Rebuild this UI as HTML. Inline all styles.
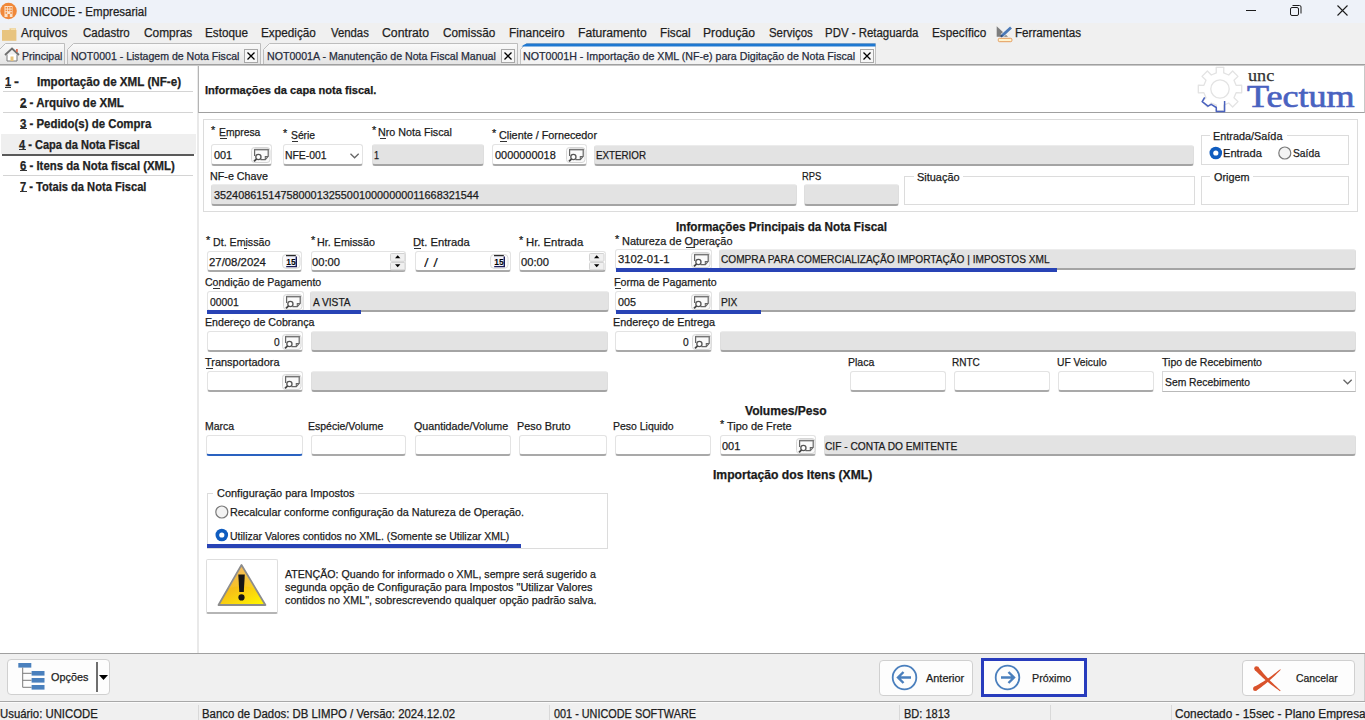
<!DOCTYPE html>
<html><head><meta charset="utf-8">
<style>
*{box-sizing:border-box;margin:0;padding:0}
html,body{width:1365px;height:720px;overflow:hidden;background:#fff;font-family:"Liberation Sans",sans-serif;font-size:11px;color:#000}
.a{position:absolute}
.t{position:absolute;white-space:nowrap;-webkit-text-stroke:0.25px currentColor}
svg{position:absolute;overflow:visible}
</style></head><body>
<div class="a" style="left:0px;top:0px;width:1365px;height:23px;background:#eef2f9"></div>
<svg style="left:0;top:2px" width="18" height="18" viewBox="0 0 18 18"><circle cx="8.5" cy="9" r="8.3" fill="#f0883a"/><rect x="4.5" y="4" width="8" height="11" fill="#fbe3cc"/><g fill="#f0883a"><rect x="5.5" y="5" width="1.6" height="1.6"/><rect x="7.9" y="5" width="1.6" height="1.6"/><rect x="10.3" y="5" width="1.6" height="1.6"/><rect x="5.5" y="7.6" width="1.6" height="1.6"/><rect x="7.9" y="7.6" width="1.6" height="1.6"/><rect x="10.3" y="7.6" width="1.6" height="1.6"/><rect x="5.5" y="10.2" width="1.6" height="1.6"/><rect x="10.3" y="10.2" width="1.6" height="1.6"/><rect x="7.6" y="12" width="2.2" height="3"/></g></svg>
<div class="t" style="left:21.89px;top:4.97px;font-size:12.50px;line-height:15.00px;font-family:'Liberation Sans';font-weight:normal;color:#202020;transform:scaleX(0.9216);transform-origin:0 0;">UNICODE - Empresarial</div>
<div class="a" style="left:1246px;top:10px;width:10px;height:1px;background:#1c1c1c"></div>
<svg style="left:1290px;top:5px" width="12" height="11"><rect x="0.5" y="2.5" width="8" height="8" rx="1.5" fill="none" stroke="#1c1c1c"/><path d="M2.5 0.5H9.5Q11 0.5 11 2V8.5" fill="none" stroke="#1c1c1c"/></svg>
<svg style="left:1337px;top:5px" width="11" height="11"><path d="M0.5 0.5L10.5 10.5M10.5 0.5L0.5 10.5" stroke="#1c1c1c" stroke-width="1.1"/></svg>
<div class="a" style="left:0px;top:23px;width:1365px;height:20px;background:#f0f0f0"></div>
<svg style="left:0;top:26px" width="18" height="16"><path d="M9.5 2.3H16V4.5H9.5Z" fill="#eccb86"/><path d="M11 2.8H15.5V3.8H11Z" fill="#f6e3b8"/><rect x="2" y="4" width="14.4" height="10.8" fill="#e8c47f"/></svg>
<div class="t" style="left:21.20px;top:25.97px;font-size:12.50px;line-height:15.00px;font-family:'Liberation Sans';font-weight:normal;color:#1e1e1e;transform:scaleX(0.9532);transform-origin:0 0;">Arquivos</div>
<div class="t" style="left:82.83px;top:25.97px;font-size:12.50px;line-height:15.00px;font-family:'Liberation Sans';font-weight:normal;color:#1e1e1e;transform:scaleX(0.9186);transform-origin:0 0;">Cadastro</div>
<div class="t" style="left:143.91px;top:25.97px;font-size:12.50px;line-height:15.00px;font-family:'Liberation Sans';font-weight:normal;color:#1e1e1e;transform:scaleX(0.9516);transform-origin:0 0;">Compras</div>
<div class="t" style="left:205.26px;top:25.97px;font-size:12.50px;line-height:15.00px;font-family:'Liberation Sans';font-weight:normal;color:#1e1e1e;transform:scaleX(0.9366);transform-origin:0 0;">Estoque</div>
<div class="t" style="left:261.36px;top:25.97px;font-size:12.50px;line-height:15.00px;font-family:'Liberation Sans';font-weight:normal;color:#1e1e1e;transform:scaleX(0.9399);transform-origin:0 0;">Expedição</div>
<div class="t" style="left:330.50px;top:25.97px;font-size:12.50px;line-height:15.00px;font-family:'Liberation Sans';font-weight:normal;color:#1e1e1e;transform:scaleX(0.9073);transform-origin:0 0;">Vendas</div>
<div class="t" style="left:382.19px;top:25.97px;font-size:12.50px;line-height:15.00px;font-family:'Liberation Sans';font-weight:normal;color:#1e1e1e;transform:scaleX(0.9815);transform-origin:0 0;">Contrato</div>
<div class="t" style="left:443.21px;top:25.97px;font-size:12.50px;line-height:15.00px;font-family:'Liberation Sans';font-weight:normal;color:#1e1e1e;transform:scaleX(0.9414);transform-origin:0 0;">Comissão</div>
<div class="t" style="left:508.85px;top:25.97px;font-size:12.50px;line-height:15.00px;font-family:'Liberation Sans';font-weight:normal;color:#1e1e1e;transform:scaleX(0.9524);transform-origin:0 0;">Financeiro</div>
<div class="t" style="left:578.03px;top:25.97px;font-size:12.50px;line-height:15.00px;font-family:'Liberation Sans';font-weight:normal;color:#1e1e1e;transform:scaleX(0.9695);transform-origin:0 0;">Faturamento</div>
<div class="t" style="left:659.96px;top:25.97px;font-size:12.50px;line-height:15.00px;font-family:'Liberation Sans';font-weight:normal;color:#1e1e1e;transform:scaleX(0.9396);transform-origin:0 0;">Fiscal</div>
<div class="t" style="left:703.03px;top:25.97px;font-size:12.50px;line-height:15.00px;font-family:'Liberation Sans';font-weight:normal;color:#1e1e1e;transform:scaleX(0.9720);transform-origin:0 0;">Produção</div>
<div class="t" style="left:768.54px;top:25.97px;font-size:12.50px;line-height:15.00px;font-family:'Liberation Sans';font-weight:normal;color:#1e1e1e;transform:scaleX(0.9117);transform-origin:0 0;">Serviços</div>
<div class="t" style="left:825.48px;top:25.97px;font-size:12.50px;line-height:15.00px;font-family:'Liberation Sans';font-weight:normal;color:#1e1e1e;transform:scaleX(0.9152);transform-origin:0 0;">PDV - Retaguarda</div>
<div class="t" style="left:932.26px;top:25.97px;font-size:12.50px;line-height:15.00px;font-family:'Liberation Sans';font-weight:normal;color:#1e1e1e;transform:scaleX(0.9410);transform-origin:0 0;">Específico</div>
<div class="t" style="left:1014.87px;top:25.97px;font-size:12.50px;line-height:15.00px;font-family:'Liberation Sans';font-weight:normal;color:#1e1e1e;transform:scaleX(0.9312);transform-origin:0 0;">Ferramentas</div>
<svg style="left:995px;top:25px" width="18" height="18"><path d="M1.7 1.3V11.7H13Z" fill="#7d7d7d"/><path d="M7 10.8L16.3 2.3" stroke="#f4f4f4" stroke-width="4.2"/><path d="M7.2 10.6L16 2.5" stroke="#4b79b6" stroke-width="2.8"/><path d="M5.8 11.8L7.5 10.2" stroke="#2d4f80" stroke-width="2"/><rect x="3.3" y="13.3" width="13.6" height="3.4" rx="1.2" fill="#fff3cc" stroke="#e39a5c" stroke-width="1"/></svg>
<div class="a" style="left:0px;top:43px;width:1365px;height:22px;background:#f0f0f0"></div>
<svg style="left:-1px;top:43px" width="67" height="22"><defs><linearGradient id="tg-1" x1="0" y1="0" x2="0" y2="1"><stop offset="0" stop-color="#fafafa"/><stop offset="1" stop-color="#e3e3e3"/></linearGradient></defs><path d="M0.5 22V6.5L6.5 0.5H65.5V22" fill="url(#tg-1)" stroke="#bdbdbd"/></svg>
<svg style="left:67px;top:43px" width="195" height="22"><defs><linearGradient id="tg67" x1="0" y1="0" x2="0" y2="1"><stop offset="0" stop-color="#fafafa"/><stop offset="1" stop-color="#e3e3e3"/></linearGradient></defs><path d="M0.5 22V6.5L6.5 0.5H193.5V22" fill="url(#tg67)" stroke="#bdbdbd"/></svg>
<svg style="left:263px;top:43px" width="256" height="22"><defs><linearGradient id="tg263" x1="0" y1="0" x2="0" y2="1"><stop offset="0" stop-color="#fafafa"/><stop offset="1" stop-color="#e3e3e3"/></linearGradient></defs><path d="M0.5 22V6.5L6.5 0.5H254.5V22" fill="url(#tg263)" stroke="#bdbdbd"/></svg>
<svg style="left:520px;top:43px" width="357" height="22"><defs><linearGradient id="ta" x1="0" y1="0" x2="0" y2="1"><stop offset="0" stop-color="#fdfdfd"/><stop offset="1" stop-color="#f1f1f1"/></linearGradient></defs><path d="M0.5 22V6.5L6.5 0.5H355.5V22" fill="url(#ta)" stroke="#c4c4c4"/><path d="M3.5 2L6.5 0.5H355.5V3.5H1.5Z" fill="#1f78d1"/></svg>
<div class="a" style="left:0px;top:64px;width:1365px;height:1px;background:#a0a0a0"></div>
<div class="a" style="left:0px;top:65px;width:1365px;height:1px;background:#c8c8c8"></div>
<svg style="left:4px;top:47px" width="16" height="15"><path d="M1 8L8 1.5L15 8" fill="none" stroke="#6e6e6e" stroke-width="1.8"/><path d="M3 7.5V14H13V7.5" fill="#fff" stroke="#7a7a7a" stroke-width="1"/><rect x="6.5" y="9.5" width="3" height="4.5" fill="#e8c37a"/><rect x="12" y="2" width="1.8" height="3" fill="#e07055"/></svg>
<div class="t" style="left:22.06px;top:49.77px;font-size:11.50px;line-height:13.80px;font-family:'Liberation Sans';font-weight:normal;color:#252a3a;transform:scaleX(0.9160);transform-origin:0 0;">Principal</div>
<div class="t" style="left:71.36px;top:49.77px;font-size:11.50px;line-height:13.80px;font-family:'Liberation Sans';font-weight:normal;color:#252a3a;transform:scaleX(0.9180);transform-origin:0 0;">NOT0001 - Listagem de Nota Fiscal</div>
<div class="a" style="left:244px;top:48.6px;width:14px;height:14px;border:1px solid #a8a8a8;background:#f7f7f7"></div>
<svg style="left:247px;top:51.6px" width="8" height="8"><path d="M0.5 0.5L7.5 7.5M7.5 0.5L0.5 7.5" stroke="#000" stroke-width="1.3"/></svg>
<div class="t" style="left:266.85px;top:49.77px;font-size:11.50px;line-height:13.80px;font-family:'Liberation Sans';font-weight:normal;color:#252a3a;transform:scaleX(0.9226);transform-origin:0 0;">NOT0001A - Manutenção de Nota Fiscal Manual</div>
<div class="a" style="left:500.6px;top:48.6px;width:14px;height:14px;border:1px solid #a8a8a8;background:#f7f7f7"></div>
<svg style="left:503.6px;top:51.6px" width="8" height="8"><path d="M0.5 0.5L7.5 7.5M7.5 0.5L0.5 7.5" stroke="#000" stroke-width="1.3"/></svg>
<div class="t" style="left:522.85px;top:49.77px;font-size:11.50px;line-height:13.80px;font-family:'Liberation Sans';font-weight:normal;color:#252a3a;transform:scaleX(0.9257);transform-origin:0 0;">NOT0001H - Importação de XML (NF-e) para Digitação de Nota Fiscal</div>
<div class="a" style="left:859.5px;top:48.6px;width:14px;height:14px;border:1px solid #a8a8a8;background:#f7f7f7"></div>
<svg style="left:862.5px;top:51.6px" width="8" height="8"><path d="M0.5 0.5L7.5 7.5M7.5 0.5L0.5 7.5" stroke="#000" stroke-width="1.3"/></svg>
<div class="a" style="left:0px;top:66px;width:197px;height:588px;background:#fff"></div>
<div class="a" style="left:197px;top:66px;width:2px;height:588px;background:#e9e9e9"></div>
<div class="a" style="left:1px;top:134px;width:195px;height:20px;background:#efefef"></div>
<div class="a" style="left:3px;top:91px;width:190px;height:1px;background:#d4d4d4"></div>
<div class="a" style="left:3px;top:112px;width:190px;height:1px;background:#d4d4d4"></div>
<div class="a" style="left:3px;top:175px;width:190px;height:1px;background:#d4d4d4"></div>
<div class="a" style="left:2px;top:154px;width:192px;height:2px;background:#5a5a5a"></div>
<div class="t" style="left:4.94px;top:75.27px;font-size:12.00px;line-height:14.40px;font-family:'Liberation Sans';font-weight:bold;color:#222;transform:scaleX(0.9220);transform-origin:0 0;">1</div>
<div class="a" style="left:5px;top:87px;width:6px;height:1px;background:#333"></div>
<div class="t" style="left:13.56px;top:75.27px;font-size:12.00px;line-height:14.40px;font-family:'Liberation Sans';font-weight:bold;color:#222;transform:scaleX(1.2346);transform-origin:0 0;">-</div>
<div class="t" style="left:36.60px;top:75.27px;font-size:12.00px;line-height:14.40px;font-family:'Liberation Sans';font-weight:bold;color:#222;transform:scaleX(0.9706);transform-origin:0 0;">Importação de XML (NF-e)</div>
<div class="t" style="left:20.05px;top:95.97px;font-size:12.00px;line-height:14.40px;font-family:'Liberation Sans';font-weight:bold;color:#222;transform:scaleX(0.9587);transform-origin:0 0;">2 - Arquivo de XML</div>
<div class="a" style="left:20px;top:107px;width:7px;height:1px;background:#333"></div>
<div class="t" style="left:20.17px;top:117.07px;font-size:12.00px;line-height:14.40px;font-family:'Liberation Sans';font-weight:bold;color:#222;transform:scaleX(0.9511);transform-origin:0 0;">3 - Pedido(s) de Compra</div>
<div class="a" style="left:20px;top:128px;width:7px;height:1px;background:#333"></div>
<div class="t" style="left:19.49px;top:137.77px;font-size:12.00px;line-height:14.40px;font-family:'Liberation Sans';font-weight:bold;color:#222;transform:scaleX(0.9200);transform-origin:0 0;">4 - Capa da Nota Fiscal</div>
<div class="a" style="left:19px;top:149px;width:7px;height:1px;background:#333"></div>
<div class="t" style="left:20.06px;top:158.87px;font-size:12.00px;line-height:14.40px;font-family:'Liberation Sans';font-weight:bold;color:#222;transform:scaleX(0.9478);transform-origin:0 0;">6 - Itens da Nota fiscal (XML)</div>
<div class="a" style="left:20px;top:170px;width:7px;height:1px;background:#333"></div>
<div class="t" style="left:19.96px;top:179.97px;font-size:12.00px;line-height:14.40px;font-family:'Liberation Sans';font-weight:bold;color:#222;transform:scaleX(0.9262);transform-origin:0 0;">7 - Totais da Nota Fiscal</div>
<div class="a" style="left:20px;top:191px;width:7px;height:1px;background:#333"></div>
<div class="a" style="left:198px;top:66px;width:1167px;height:47px;border-left:1px solid #b4b4b4;border-bottom:1px solid #a0a0a0;border-right:1px solid #c8c8c8;background:#fff"></div>
<div class="t" style="left:205.33px;top:84.07px;font-size:11.50px;line-height:13.80px;font-family:'Liberation Sans';font-weight:bold;color:#1a1a1a;transform:scaleX(0.9648);transform-origin:0 0;">Informações da capa nota fiscal.</div>
<svg style="left:1196px;top:66px" width="48" height="48" viewBox="0 0 48 48"><g fill="none" stroke="#e3e3e3" stroke-width="1.3" stroke-linejoin="round"><path d="M20.3 39.1 L20.2 44.7 L27.8 44.7 L27.7 39.1 L32.7 37.0 L36.6 41.0 L42.0 35.6 L38.0 31.7 L40.1 26.7 L45.7 26.8 L45.7 19.2 L40.1 19.3 L38.0 14.3 L42.0 10.4 L36.6 5.0 L32.7 9.0 L27.7 6.9 L27.8 1.3 L20.2 1.3 L20.3 6.9 L15.3 9.0 L11.4 5.0 L6.0 10.4 L10.0 14.3 L7.9 19.3 L2.3 19.2 L2.3 26.8 L7.9 26.7 L10.0 31.7 L6.0 35.6 L11.4 41.0 L15.3 37.0Z"/><circle cx="24" cy="23" r="9.2"/></g><path d="M8.7 31.3L6.2 35.7L12 40.2L15.2 38.3L20.3 41.5V45.4H28.6V35.1" fill="none" stroke="#4a62bf" stroke-width="1.5" stroke-linejoin="round"/></svg>
<div class="t" style="left:1247.52px;top:65.56px;font-size:17.00px;line-height:20.40px;font-family:'Liberation Serif';font-weight:normal;color:#333333;transform:scaleX(1.0680);transform-origin:0 0;">unc</div>
<div class="t" style="left:1247.34px;top:76.84px;font-size:32.00px;line-height:38.40px;font-family:'Liberation Serif';font-weight:normal;color:#4a62c0;transform:scaleX(1.1272);transform-origin:0 0;-webkit-text-stroke:0.7px #4a62c0;">Tectum</div>
<div class="a" style="left:203px;top:119px;width:1155px;height:93px;border:1px solid #dcdcdc"></div>
<div class="t" style="left:211.09px;top:125.08px;font-size:10.00px;line-height:12.00px;font-family:'Liberation Sans';font-weight:normal;color:#1b1b1b;transform:scaleX(1.0811);transform-origin:0 0;">*</div>
<div class="t" style="left:218.67px;top:126.37px;font-size:11.50px;line-height:13.80px;font-family:'Liberation Sans';font-weight:normal;color:#1b1b1b;transform:scaleX(0.8972);transform-origin:0 0;">Empresa</div>
<div class="a" style="left:220px;top:138px;width:7px;height:1px;background:#333"></div>
<div class="t" style="left:283.19px;top:127.78px;font-size:10.00px;line-height:12.00px;font-family:'Liberation Sans';font-weight:normal;color:#1b1b1b;transform:scaleX(1.0811);transform-origin:0 0;">*</div>
<div class="t" style="left:291.29px;top:129.07px;font-size:11.50px;line-height:13.80px;font-family:'Liberation Sans';font-weight:normal;color:#1b1b1b;transform:scaleX(0.8972);transform-origin:0 0;">Série</div>
<div class="a" style="left:292px;top:141px;width:6px;height:1px;background:#333"></div>
<div class="t" style="left:371.89px;top:125.08px;font-size:10.00px;line-height:12.00px;font-family:'Liberation Sans';font-weight:normal;color:#1b1b1b;transform:scaleX(1.0811);transform-origin:0 0;">*</div>
<div class="t" style="left:378.44px;top:126.37px;font-size:11.50px;line-height:13.80px;font-family:'Liberation Sans';font-weight:normal;color:#1b1b1b;transform:scaleX(0.9329);transform-origin:0 0;">Nro Nota Fiscal</div>
<div class="a" style="left:380px;top:138px;width:6px;height:1px;background:#333"></div>
<div class="t" style="left:491.59px;top:127.78px;font-size:10.00px;line-height:12.00px;font-family:'Liberation Sans';font-weight:normal;color:#1b1b1b;transform:scaleX(1.0811);transform-origin:0 0;">*</div>
<div class="t" style="left:499.46px;top:129.07px;font-size:11.50px;line-height:13.80px;font-family:'Liberation Sans';font-weight:normal;color:#1b1b1b;transform:scaleX(0.9404);transform-origin:0 0;">Cliente / Fornecedor</div>
<div class="a" style="left:500px;top:141px;width:7px;height:1px;background:#333"></div>
<div class="a" style="left:211px;top:144px;width:61px;height:22px;background:#fff;border:1px solid #e3e3e3;border-bottom:2px solid #a9a9a9;border-radius:3px"></div>
<svg style="left:251px;top:147px" width="20" height="16" viewBox="0 0 20 16"><rect x="0.5" y="0.5" width="18.5" height="15" rx="3" fill="#fafafa" stroke="#d6d6d6"/><path d="M3.6 9V2.5H17.2V9.3L14.3 12.6H9.5" fill="none" stroke="#666" stroke-width="1.2"/><path d="M3.4 2.6H17.4" stroke="#777" stroke-width="1.6"/><path d="M14.3 12.6V9.5H17.2" fill="none" stroke="#666" stroke-width="1.1"/><circle cx="7.4" cy="10" r="2.6" fill="#fff" stroke="#555" stroke-width="1.3"/><path d="M5.6 11.9L3 14.4" stroke="#444" stroke-width="1.8"/></svg>
<div class="t" style="left:214.37px;top:149.47px;font-size:11.50px;line-height:13.80px;font-family:'Liberation Sans';font-weight:normal;color:#1b1b1b;transform:scaleX(0.9448);transform-origin:0 0;">001</div>
<div class="a" style="left:283px;top:144px;width:80px;height:22px;background:#fff;border:1px solid #e3e3e3;border-bottom:2px solid #a9a9a9;border-radius:3px"></div>
<div class="t" style="left:284.87px;top:149.07px;font-size:11.50px;line-height:13.80px;font-family:'Liberation Sans';font-weight:normal;color:#1b1b1b;transform:scaleX(0.9043);transform-origin:0 0;">NFE-001</div>
<svg style="left:349.5px;top:153px" width="10" height="6"><path d="M0.5 0.8L4.6 4.8L8.7 0.8" fill="none" stroke="#666" stroke-width="1.3"/></svg>
<div class="a" style="left:371.7px;top:144px;width:112.60000000000002px;height:22px;background:#e3e3e3;border:1px solid #dedede;border-top-color:#ececec;border-bottom:2px solid #a4a4a4;border-radius:3px"></div>
<div class="t" style="left:374.36px;top:149.07px;font-size:11.50px;line-height:13.80px;font-family:'Liberation Sans';font-weight:normal;color:#1b1b1b;transform:scaleX(0.7905);transform-origin:0 0;">1</div>
<div class="a" style="left:491.7px;top:144px;width:95.30000000000001px;height:22px;background:#fff;border:1px solid #e3e3e3;border-bottom:2px solid #a9a9a9;border-radius:3px"></div>
<svg style="left:565.5px;top:147px" width="20" height="16" viewBox="0 0 20 16"><rect x="0.5" y="0.5" width="18.5" height="15" rx="3" fill="#fafafa" stroke="#d6d6d6"/><path d="M3.6 9V2.5H17.2V9.3L14.3 12.6H9.5" fill="none" stroke="#666" stroke-width="1.2"/><path d="M3.4 2.6H17.4" stroke="#777" stroke-width="1.6"/><path d="M14.3 12.6V9.5H17.2" fill="none" stroke="#666" stroke-width="1.1"/><circle cx="7.4" cy="10" r="2.6" fill="#fff" stroke="#555" stroke-width="1.3"/><path d="M5.6 11.9L3 14.4" stroke="#444" stroke-width="1.8"/></svg>
<div class="t" style="left:494.67px;top:149.07px;font-size:11.50px;line-height:13.80px;font-family:'Liberation Sans';font-weight:normal;color:#1b1b1b;transform:scaleX(0.9494);transform-origin:0 0;">0000000018</div>
<div class="a" style="left:594.3px;top:145px;width:599.7px;height:21px;background:#e3e3e3;border:1px solid #dedede;border-top-color:#ececec;border-bottom:2px solid #a4a4a4;border-radius:3px"></div>
<div class="t" style="left:595.92px;top:149.07px;font-size:11.50px;line-height:13.80px;font-family:'Liberation Sans';font-weight:normal;color:#1b1b1b;transform:scaleX(0.8505);transform-origin:0 0;">EXTERIOR</div>
<div class="t" style="left:209.84px;top:169.77px;font-size:11.50px;line-height:13.80px;font-family:'Liberation Sans';font-weight:normal;color:#1b1b1b;transform:scaleX(0.9331);transform-origin:0 0;">NF-e Chave</div>
<div class="a" style="left:211px;top:184px;width:585.5px;height:22px;background:#e3e3e3;border:1px solid #dedede;border-top-color:#ececec;border-bottom:2px solid #a4a4a4;border-radius:3px"></div>
<div class="t" style="left:213.67px;top:189.07px;font-size:11.50px;line-height:13.80px;font-family:'Liberation Sans';font-weight:normal;color:#1b1b1b;transform:scaleX(0.9442);transform-origin:0 0;">35240861514758000132550010000000011668321544</div>
<div class="t" style="left:802.05px;top:169.77px;font-size:11.50px;line-height:13.80px;font-family:'Liberation Sans';font-weight:normal;color:#1b1b1b;transform:scaleX(0.8161);transform-origin:0 0;">RPS</div>
<div class="a" style="left:803.6px;top:184px;width:95.0px;height:22px;background:#e3e3e3;border:1px solid #dedede;border-top-color:#ececec;border-bottom:2px solid #a4a4a4;border-radius:3px"></div>
<div class="a" style="left:904.4px;top:176px;width:290.19999999999993px;height:29px;border:1px solid #dcdcdc"></div>
<div class="a" style="left:913.6px;top:175px;width:49.69999999999993px;height:3px;background:#fff"></div>
<div class="t" style="left:917.16px;top:170.57px;font-size:11.50px;line-height:13.80px;font-family:'Liberation Sans';font-weight:normal;color:#1b1b1b;transform:scaleX(0.9504);transform-origin:0 0;">Situação</div>
<div class="a" style="left:1201px;top:135px;width:148px;height:30px;border:1px solid #dcdcdc"></div>
<div class="a" style="left:1210px;top:134px;width:76.59999999999991px;height:3px;background:#fff"></div>
<div class="t" style="left:1213.13px;top:130.47px;font-size:11.50px;line-height:13.80px;font-family:'Liberation Sans';font-weight:normal;color:#1b1b1b;transform:scaleX(0.9443);transform-origin:0 0;">Entrada/Saída</div>
<svg style="left:1208.5px;top:146.2px" width="14" height="14"><circle cx="6.8" cy="7" r="6.3" fill="#0f5cbf"/><circle cx="6.8" cy="7" r="2.6" fill="#fff"/></svg>
<div class="t" style="left:1223.11px;top:147.27px;font-size:11.50px;line-height:13.80px;font-family:'Liberation Sans';font-weight:normal;color:#1b1b1b;transform:scaleX(0.9644);transform-origin:0 0;">Entrada</div>
<svg style="left:1277.5px;top:146.2px" width="14" height="14"><circle cx="6.8" cy="7" r="6" fill="#f3f3f3" stroke="#7a7a7a" stroke-width="1.2"/></svg>
<div class="t" style="left:1292.59px;top:147.27px;font-size:11.50px;line-height:13.80px;font-family:'Liberation Sans';font-weight:normal;color:#1b1b1b;transform:scaleX(0.8942);transform-origin:0 0;">Saída</div>
<div class="a" style="left:1201px;top:176px;width:148px;height:29px;border:1px solid #dcdcdc"></div>
<div class="a" style="left:1210.4px;top:175px;width:42.299999999999955px;height:3px;background:#fff"></div>
<div class="t" style="left:1213.97px;top:170.57px;font-size:11.50px;line-height:13.80px;font-family:'Liberation Sans';font-weight:normal;color:#1b1b1b;transform:scaleX(0.9393);transform-origin:0 0;">Origem</div>
<div class="t" style="left:676.30px;top:220.47px;font-size:12.00px;line-height:14.40px;font-family:'Liberation Sans';font-weight:bold;color:#1a1a1a;transform:scaleX(0.9730);transform-origin:0 0;">Informações Principais da Nota Fiscal</div>
<div class="t" style="left:206.39px;top:234.88px;font-size:10.00px;line-height:12.00px;font-family:'Liberation Sans';font-weight:normal;color:#1b1b1b;transform:scaleX(1.0811);transform-origin:0 0;">*</div>
<div class="t" style="left:213.45px;top:236.17px;font-size:11.50px;line-height:13.80px;font-family:'Liberation Sans';font-weight:normal;color:#1b1b1b;transform:scaleX(0.9250);transform-origin:0 0;">Dt. Emissão</div>
<div class="a" style="left:244px;top:248px;width:3px;height:1px;background:#333"></div>
<div class="a" style="left:206.5px;top:251px;width:95.5px;height:21px;background:#fff;border:1px solid #e3e3e3;border-bottom:2px solid #a9a9a9;border-radius:3px"></div>
<svg style="left:281.5px;top:254px" width="19" height="15" viewBox="0 0 19 15"><rect x="0.5" y="0.5" width="17.5" height="13.8" rx="3.5" fill="#fbfbfb" stroke="#dadada"/><rect x="4" y="2" width="10" height="10.3" fill="#f2f2fb"/><path d="M4 1.6H13.8" stroke="#2a2a2a" stroke-width="1.3"/><path d="M14.3 2.5V12.6H4.2" fill="none" stroke="#1d1d58" stroke-width="1.4"/><text x="9" y="10.6" font-family="Liberation Sans" font-weight="bold" font-size="8.5" text-anchor="middle" fill="#000">15</text></svg>
<div class="t" style="left:209.43px;top:255.57px;font-size:11.50px;line-height:13.80px;font-family:'Liberation Sans';font-weight:normal;color:#1b1b1b;transform:scaleX(0.9880);transform-origin:0 0;">27/08/2024</div>
<div class="t" style="left:310.79px;top:234.88px;font-size:10.00px;line-height:12.00px;font-family:'Liberation Sans';font-weight:normal;color:#1b1b1b;transform:scaleX(1.0811);transform-origin:0 0;">*</div>
<div class="t" style="left:317.14px;top:236.17px;font-size:11.50px;line-height:13.80px;font-family:'Liberation Sans';font-weight:normal;color:#1b1b1b;transform:scaleX(0.9349);transform-origin:0 0;">Hr. Emissão</div>
<div class="a" style="left:310.9px;top:251px;width:95.30000000000001px;height:21px;background:#fff;border:1px solid #e3e3e3;border-bottom:2px solid #a9a9a9;border-radius:3px"></div>
<svg style="left:390px;top:252.5px" width="16" height="18" viewBox="0 0 16 18"><rect x="0.5" y="0.5" width="14.5" height="7.8" rx="1" fill="#f0f0f0" stroke="#d2d2d2"/><rect x="0.5" y="9.5" width="14.5" height="7.4" rx="1" fill="#f0f0f0" stroke="#d2d2d2"/><path d="M5 5.2H10.4L7.7 2.2Z" fill="#000"/><path d="M5 11.2H10.4L7.7 14.2Z" fill="#000"/></svg>
<div class="t" style="left:312.47px;top:255.57px;font-size:11.50px;line-height:13.80px;font-family:'Liberation Sans';font-weight:normal;color:#1b1b1b;transform:scaleX(0.9708);transform-origin:0 0;">00:00</div>
<div class="t" style="left:413.10px;top:236.17px;font-size:11.50px;line-height:13.80px;font-family:'Liberation Sans';font-weight:normal;color:#1b1b1b;transform:scaleX(0.9740);transform-origin:0 0;">Dt. Entrada</div>
<div class="a" style="left:414px;top:248px;width:7px;height:1px;background:#333"></div>
<div class="a" style="left:414.6px;top:251px;width:96.59999999999997px;height:21px;background:#fff;border:1px solid #e3e3e3;border-bottom:2px solid #a9a9a9;border-radius:3px"></div>
<svg style="left:490.3px;top:254px" width="19" height="15" viewBox="0 0 19 15"><rect x="0.5" y="0.5" width="17.5" height="13.8" rx="3.5" fill="#fbfbfb" stroke="#dadada"/><rect x="4" y="2" width="10" height="10.3" fill="#f2f2fb"/><path d="M4 1.6H13.8" stroke="#2a2a2a" stroke-width="1.3"/><path d="M14.3 2.5V12.6H4.2" fill="none" stroke="#1d1d58" stroke-width="1.4"/><text x="9" y="10.6" font-family="Liberation Sans" font-weight="bold" font-size="8.5" text-anchor="middle" fill="#000">15</text></svg>
<div class="t" style="left:424.00px;top:255.37px;font-size:13.00px;line-height:15.60px;font-family:'Liberation Sans';font-weight:normal;color:#1b1b1b;transform:scaleX(1.2887);transform-origin:0 0;-webkit-text-stroke:0;">/ /</div>
<div class="t" style="left:518.89px;top:234.88px;font-size:10.00px;line-height:12.00px;font-family:'Liberation Sans';font-weight:normal;color:#1b1b1b;transform:scaleX(1.0811);transform-origin:0 0;">*</div>
<div class="t" style="left:525.60px;top:236.17px;font-size:11.50px;line-height:13.80px;font-family:'Liberation Sans';font-weight:normal;color:#1b1b1b;transform:scaleX(0.9827);transform-origin:0 0;">Hr. Entrada</div>
<div class="a" style="left:519px;top:251px;width:86.60000000000002px;height:21px;background:#fff;border:1px solid #e3e3e3;border-bottom:2px solid #a9a9a9;border-radius:3px"></div>
<svg style="left:589px;top:252.5px" width="16" height="18" viewBox="0 0 16 18"><rect x="0.5" y="0.5" width="14.5" height="7.8" rx="1" fill="#f0f0f0" stroke="#d2d2d2"/><rect x="0.5" y="9.5" width="14.5" height="7.4" rx="1" fill="#f0f0f0" stroke="#d2d2d2"/><path d="M5 5.2H10.4L7.7 2.2Z" fill="#000"/><path d="M5 11.2H10.4L7.7 14.2Z" fill="#000"/></svg>
<div class="t" style="left:521.17px;top:255.57px;font-size:11.50px;line-height:13.80px;font-family:'Liberation Sans';font-weight:normal;color:#1b1b1b;transform:scaleX(0.9708);transform-origin:0 0;">00:00</div>
<div class="t" style="left:615.29px;top:234.18px;font-size:10.00px;line-height:12.00px;font-family:'Liberation Sans';font-weight:normal;color:#1b1b1b;transform:scaleX(1.0811);transform-origin:0 0;">*</div>
<div class="t" style="left:621.83px;top:235.47px;font-size:11.50px;line-height:13.80px;font-family:'Liberation Sans';font-weight:normal;color:#1b1b1b;transform:scaleX(0.9495);transform-origin:0 0;">Natureza de Operação</div>
<div class="a" style="left:686px;top:247px;width:9px;height:1px;background:#333"></div>
<div class="a" style="left:615.4px;top:249px;width:96.30000000000007px;height:21px;background:#fff;border:1px solid #e3e3e3;border-bottom:2px solid #a9a9a9;border-radius:3px"></div>
<svg style="left:690.5px;top:252px" width="20" height="16" viewBox="0 0 20 16"><rect x="0.5" y="0.5" width="18.5" height="15" rx="3" fill="#fafafa" stroke="#d6d6d6"/><path d="M3.6 9V2.5H17.2V9.3L14.3 12.6H9.5" fill="none" stroke="#666" stroke-width="1.2"/><path d="M3.4 2.6H17.4" stroke="#777" stroke-width="1.6"/><path d="M14.3 12.6V9.5H17.2" fill="none" stroke="#666" stroke-width="1.1"/><circle cx="7.4" cy="10" r="2.6" fill="#fff" stroke="#555" stroke-width="1.3"/><path d="M5.6 11.9L3 14.4" stroke="#444" stroke-width="1.8"/></svg>
<div class="t" style="left:617.96px;top:252.77px;font-size:11.50px;line-height:13.80px;font-family:'Liberation Sans';font-weight:normal;color:#1b1b1b;transform:scaleX(0.9815);transform-origin:0 0;">3102-01-1</div>
<div class="a" style="left:719px;top:249px;width:637px;height:21px;background:#e3e3e3;border:1px solid #dedede;border-top-color:#ececec;border-bottom:2px solid #a4a4a4;border-radius:3px"></div>
<div class="t" style="left:721.09px;top:252.97px;font-size:11.50px;line-height:13.80px;font-family:'Liberation Sans';font-weight:normal;color:#1b1b1b;transform:scaleX(0.8799);transform-origin:0 0;">COMPRA PARA COMERCIALIZAÇÃO IMPORTAÇÃO | IMPOSTOS XML</div>
<div class="a" style="left:616px;top:268px;width:441.0999999999999px;height:4px;background:#2843b5"></div>
<div class="t" style="left:205.37px;top:276.07px;font-size:11.50px;line-height:13.80px;font-family:'Liberation Sans';font-weight:normal;color:#1b1b1b;transform:scaleX(0.9180);transform-origin:0 0;">Condição de Pagamento</div>
<div class="a" style="left:213px;top:288px;width:7px;height:1px;background:#333"></div>
<div class="a" style="left:206.5px;top:291px;width:97.5px;height:21px;background:#fff;border:1px solid #e3e3e3;border-bottom:2px solid #a9a9a9;border-radius:3px"></div>
<svg style="left:282.5px;top:294px" width="20" height="16" viewBox="0 0 20 16"><rect x="0.5" y="0.5" width="18.5" height="15" rx="3" fill="#fafafa" stroke="#d6d6d6"/><path d="M3.6 9V2.5H17.2V9.3L14.3 12.6H9.5" fill="none" stroke="#666" stroke-width="1.2"/><path d="M3.4 2.6H17.4" stroke="#777" stroke-width="1.6"/><path d="M14.3 12.6V9.5H17.2" fill="none" stroke="#666" stroke-width="1.1"/><circle cx="7.4" cy="10" r="2.6" fill="#fff" stroke="#555" stroke-width="1.3"/><path d="M5.6 11.9L3 14.4" stroke="#444" stroke-width="1.8"/></svg>
<div class="t" style="left:209.69px;top:295.57px;font-size:11.50px;line-height:13.80px;font-family:'Liberation Sans';font-weight:normal;color:#1b1b1b;transform:scaleX(0.9002);transform-origin:0 0;">00001</div>
<div class="a" style="left:310.3px;top:291px;width:298.40000000000003px;height:21px;background:#e3e3e3;border:1px solid #dedede;border-top-color:#ececec;border-bottom:2px solid #a4a4a4;border-radius:3px"></div>
<div class="t" style="left:312.80px;top:295.57px;font-size:11.50px;line-height:13.80px;font-family:'Liberation Sans';font-weight:normal;color:#1b1b1b;transform:scaleX(0.8827);transform-origin:0 0;">A VISTA</div>
<div class="a" style="left:206.5px;top:310px;width:154.5px;height:4px;background:#2843b5"></div>
<div class="t" style="left:614.15px;top:276.07px;font-size:11.50px;line-height:13.80px;font-family:'Liberation Sans';font-weight:normal;color:#1b1b1b;transform:scaleX(0.9236);transform-origin:0 0;">Forma de Pagamento</div>
<div class="a" style="left:615px;top:288px;width:6px;height:1px;background:#333"></div>
<div class="a" style="left:615.4px;top:291px;width:96.30000000000007px;height:21px;background:#fff;border:1px solid #e3e3e3;border-bottom:2px solid #a9a9a9;border-radius:3px"></div>
<svg style="left:690.5px;top:294px" width="20" height="16" viewBox="0 0 20 16"><rect x="0.5" y="0.5" width="18.5" height="15" rx="3" fill="#fafafa" stroke="#d6d6d6"/><path d="M3.6 9V2.5H17.2V9.3L14.3 12.6H9.5" fill="none" stroke="#666" stroke-width="1.2"/><path d="M3.4 2.6H17.4" stroke="#777" stroke-width="1.6"/><path d="M14.3 12.6V9.5H17.2" fill="none" stroke="#666" stroke-width="1.1"/><circle cx="7.4" cy="10" r="2.6" fill="#fff" stroke="#555" stroke-width="1.3"/><path d="M5.6 11.9L3 14.4" stroke="#444" stroke-width="1.8"/></svg>
<div class="t" style="left:617.98px;top:295.57px;font-size:11.50px;line-height:13.80px;font-family:'Liberation Sans';font-weight:normal;color:#1b1b1b;transform:scaleX(0.9334);transform-origin:0 0;">005</div>
<div class="a" style="left:719px;top:291px;width:637px;height:21px;background:#e3e3e3;border:1px solid #dedede;border-top-color:#ececec;border-bottom:2px solid #a4a4a4;border-radius:3px"></div>
<div class="t" style="left:720.79px;top:295.57px;font-size:11.50px;line-height:13.80px;font-family:'Liberation Sans';font-weight:normal;color:#1b1b1b;transform:scaleX(0.8840);transform-origin:0 0;">PIX</div>
<div class="a" style="left:616px;top:310px;width:145.20000000000005px;height:4px;background:#2843b5"></div>
<div class="t" style="left:204.85px;top:316.37px;font-size:11.50px;line-height:13.80px;font-family:'Liberation Sans';font-weight:normal;color:#1b1b1b;transform:scaleX(0.9251);transform-origin:0 0;">Endereço de Cobrança</div>
<div class="a" style="left:206.7px;top:331px;width:96.60000000000002px;height:21px;background:#fff;border:1px solid #e3e3e3;border-bottom:2px solid #a9a9a9;border-radius:3px"></div>
<svg style="left:282px;top:334px" width="20" height="16" viewBox="0 0 20 16"><rect x="0.5" y="0.5" width="18.5" height="15" rx="3" fill="#fafafa" stroke="#d6d6d6"/><path d="M3.6 9V2.5H17.2V9.3L14.3 12.6H9.5" fill="none" stroke="#666" stroke-width="1.2"/><path d="M3.4 2.6H17.4" stroke="#777" stroke-width="1.6"/><path d="M14.3 12.6V9.5H17.2" fill="none" stroke="#666" stroke-width="1.1"/><circle cx="7.4" cy="10" r="2.6" fill="#fff" stroke="#555" stroke-width="1.3"/><path d="M5.6 11.9L3 14.4" stroke="#444" stroke-width="1.8"/></svg>
<div class="t" style="left:273.69px;top:335.57px;font-size:11.50px;line-height:13.80px;font-family:'Liberation Sans';font-weight:normal;color:#1b1b1b;transform:scaleX(0.8873);transform-origin:0 0;">0</div>
<div class="a" style="left:310.7px;top:331px;width:297.59999999999997px;height:21px;background:#e3e3e3;border:1px solid #dedede;border-top-color:#ececec;border-bottom:2px solid #a4a4a4;border-radius:3px"></div>
<div class="t" style="left:613.14px;top:316.37px;font-size:11.50px;line-height:13.80px;font-family:'Liberation Sans';font-weight:normal;color:#1b1b1b;transform:scaleX(0.9387);transform-origin:0 0;">Endereço de Entrega</div>
<div class="a" style="left:615.2px;top:331px;width:97.09999999999991px;height:21px;background:#fff;border:1px solid #e3e3e3;border-bottom:2px solid #a9a9a9;border-radius:3px"></div>
<svg style="left:691.5px;top:334px" width="20" height="16" viewBox="0 0 20 16"><rect x="0.5" y="0.5" width="18.5" height="15" rx="3" fill="#fafafa" stroke="#d6d6d6"/><path d="M3.6 9V2.5H17.2V9.3L14.3 12.6H9.5" fill="none" stroke="#666" stroke-width="1.2"/><path d="M3.4 2.6H17.4" stroke="#777" stroke-width="1.6"/><path d="M14.3 12.6V9.5H17.2" fill="none" stroke="#666" stroke-width="1.1"/><circle cx="7.4" cy="10" r="2.6" fill="#fff" stroke="#555" stroke-width="1.3"/><path d="M5.6 11.9L3 14.4" stroke="#444" stroke-width="1.8"/></svg>
<div class="t" style="left:682.69px;top:335.57px;font-size:11.50px;line-height:13.80px;font-family:'Liberation Sans';font-weight:normal;color:#1b1b1b;transform:scaleX(0.8873);transform-origin:0 0;">0</div>
<div class="a" style="left:720.2px;top:331px;width:635.8px;height:21px;background:#e3e3e3;border:1px solid #dedede;border-top-color:#ececec;border-bottom:2px solid #a4a4a4;border-radius:3px"></div>
<div class="t" style="left:205.48px;top:356.37px;font-size:11.50px;line-height:13.80px;font-family:'Liberation Sans';font-weight:normal;color:#1b1b1b;transform:scaleX(0.9524);transform-origin:0 0;">Transportadora</div>
<div class="a" style="left:206px;top:368px;width:7px;height:1px;background:#333"></div>
<div class="a" style="left:206.7px;top:371px;width:96.60000000000002px;height:21px;background:#fff;border:1px solid #e3e3e3;border-bottom:2px solid #a9a9a9;border-radius:3px"></div>
<svg style="left:282px;top:374px" width="20" height="16" viewBox="0 0 20 16"><rect x="0.5" y="0.5" width="18.5" height="15" rx="3" fill="#fafafa" stroke="#d6d6d6"/><path d="M3.6 9V2.5H17.2V9.3L14.3 12.6H9.5" fill="none" stroke="#666" stroke-width="1.2"/><path d="M3.4 2.6H17.4" stroke="#777" stroke-width="1.6"/><path d="M14.3 12.6V9.5H17.2" fill="none" stroke="#666" stroke-width="1.1"/><circle cx="7.4" cy="10" r="2.6" fill="#fff" stroke="#555" stroke-width="1.3"/><path d="M5.6 11.9L3 14.4" stroke="#444" stroke-width="1.8"/></svg>
<div class="a" style="left:310.7px;top:371px;width:297.59999999999997px;height:21px;background:#e3e3e3;border:1px solid #dedede;border-top-color:#ececec;border-bottom:2px solid #a4a4a4;border-radius:3px"></div>
<div class="t" style="left:847.86px;top:356.27px;font-size:11.50px;line-height:13.80px;font-family:'Liberation Sans';font-weight:normal;color:#1b1b1b;transform:scaleX(0.9143);transform-origin:0 0;">Placa</div>
<div class="a" style="left:849.9px;top:371px;width:96.10000000000002px;height:21px;background:#fff;border:1px solid #e3e3e3;border-bottom:2px solid #a9a9a9;border-radius:3px"></div>
<div class="t" style="left:952.00px;top:356.27px;font-size:11.50px;line-height:13.80px;font-family:'Liberation Sans';font-weight:normal;color:#1b1b1b;transform:scaleX(0.8711);transform-origin:0 0;">RNTC</div>
<div class="a" style="left:954.3px;top:371px;width:95.70000000000005px;height:21px;background:#fff;border:1px solid #e3e3e3;border-bottom:2px solid #a9a9a9;border-radius:3px"></div>
<div class="t" style="left:1056.78px;top:356.17px;font-size:11.50px;line-height:13.80px;font-family:'Liberation Sans';font-weight:normal;color:#1b1b1b;transform:scaleX(0.8936);transform-origin:0 0;">UF Veiculo</div>
<div class="a" style="left:1058.3px;top:371px;width:96.0px;height:21px;background:#fff;border:1px solid #e3e3e3;border-bottom:2px solid #a9a9a9;border-radius:3px"></div>
<div class="t" style="left:1161.59px;top:356.17px;font-size:11.50px;line-height:13.80px;font-family:'Liberation Sans';font-weight:normal;color:#1b1b1b;transform:scaleX(0.9183);transform-origin:0 0;">Tipo de Recebimento</div>
<div class="a" style="left:1162px;top:371px;width:194px;height:21px;background:#fff;border:1px solid #d9d9d9;border-bottom:1px solid #b9b9b9"></div>
<div class="t" style="left:1165.39px;top:375.57px;font-size:11.50px;line-height:13.80px;font-family:'Liberation Sans';font-weight:normal;color:#1b1b1b;transform:scaleX(0.8984);transform-origin:0 0;">Sem Recebimento</div>
<svg style="left:1342.5px;top:379px" width="10" height="6"><path d="M0.5 0.8L4.6 4.8L8.7 0.8" fill="none" stroke="#666" stroke-width="1.3"/></svg>
<div class="t" style="left:745.20px;top:404.07px;font-size:12.00px;line-height:14.40px;font-family:'Liberation Sans';font-weight:bold;color:#1a1a1a;transform:scaleX(1.0053);transform-origin:0 0;">Volumes/Peso</div>
<div class="t" style="left:204.86px;top:420.07px;font-size:11.50px;line-height:13.80px;font-family:'Liberation Sans';font-weight:normal;color:#1b1b1b;transform:scaleX(0.9107);transform-origin:0 0;">Marca</div>
<div class="a" style="left:206px;top:435px;width:96.69999999999999px;height:21px;background:#fff;border:1px solid #e3e3e3;border-bottom:2px solid #2a62c0;border-radius:3px"></div>
<div class="t" style="left:308.46px;top:420.07px;font-size:11.50px;line-height:13.80px;font-family:'Liberation Sans';font-weight:normal;color:#1b1b1b;transform:scaleX(0.9121);transform-origin:0 0;">Espécie/Volume</div>
<div class="a" style="left:310.7px;top:435px;width:95.30000000000001px;height:21px;background:#fff;border:1px solid #e3e3e3;border-bottom:2px solid #a9a9a9;border-radius:3px"></div>
<div class="t" style="left:413.57px;top:420.07px;font-size:11.50px;line-height:13.80px;font-family:'Liberation Sans';font-weight:normal;color:#1b1b1b;transform:scaleX(0.9317);transform-origin:0 0;">Quantidade/Volume</div>
<div class="a" style="left:415px;top:435px;width:95.69999999999999px;height:21px;background:#fff;border:1px solid #e3e3e3;border-bottom:2px solid #a9a9a9;border-radius:3px"></div>
<div class="t" style="left:516.83px;top:420.07px;font-size:11.50px;line-height:13.80px;font-family:'Liberation Sans';font-weight:normal;color:#1b1b1b;transform:scaleX(0.9414);transform-origin:0 0;">Peso Bruto</div>
<div class="a" style="left:519px;top:435px;width:88.29999999999995px;height:21px;background:#fff;border:1px solid #e3e3e3;border-bottom:2px solid #a9a9a9;border-radius:3px"></div>
<div class="t" style="left:613.16px;top:420.47px;font-size:11.50px;line-height:13.80px;font-family:'Liberation Sans';font-weight:normal;color:#1b1b1b;transform:scaleX(0.9101);transform-origin:0 0;">Peso Liquido</div>
<div class="a" style="left:615.2px;top:435px;width:96.19999999999993px;height:21px;background:#fff;border:1px solid #e3e3e3;border-bottom:2px solid #a9a9a9;border-radius:3px"></div>
<div class="t" style="left:720.09px;top:419.18px;font-size:10.00px;line-height:12.00px;font-family:'Liberation Sans';font-weight:normal;color:#1b1b1b;transform:scaleX(1.0811);transform-origin:0 0;">*</div>
<div class="t" style="left:727.28px;top:420.47px;font-size:11.50px;line-height:13.80px;font-family:'Liberation Sans';font-weight:normal;color:#1b1b1b;transform:scaleX(0.9507);transform-origin:0 0;">Tipo de Frete</div>
<div class="a" style="left:719.6px;top:435px;width:96.79999999999995px;height:21px;background:#fff;border:1px solid #e3e3e3;border-bottom:2px solid #a9a9a9;border-radius:3px"></div>
<svg style="left:795.5px;top:438px" width="20" height="16" viewBox="0 0 20 16"><rect x="0.5" y="0.5" width="18.5" height="15" rx="3" fill="#fafafa" stroke="#d6d6d6"/><path d="M3.6 9V2.5H17.2V9.3L14.3 12.6H9.5" fill="none" stroke="#666" stroke-width="1.2"/><path d="M3.4 2.6H17.4" stroke="#777" stroke-width="1.6"/><path d="M14.3 12.6V9.5H17.2" fill="none" stroke="#666" stroke-width="1.1"/><circle cx="7.4" cy="10" r="2.6" fill="#fff" stroke="#555" stroke-width="1.3"/><path d="M5.6 11.9L3 14.4" stroke="#444" stroke-width="1.8"/></svg>
<div class="t" style="left:722.27px;top:440.07px;font-size:11.50px;line-height:13.80px;font-family:'Liberation Sans';font-weight:normal;color:#1b1b1b;transform:scaleX(0.9502);transform-origin:0 0;">001</div>
<div class="a" style="left:823.8px;top:435px;width:532.2px;height:21px;background:#e3e3e3;border:1px solid #dedede;border-top-color:#ececec;border-bottom:2px solid #a4a4a4;border-radius:3px"></div>
<div class="t" style="left:825.29px;top:440.07px;font-size:11.50px;line-height:13.80px;font-family:'Liberation Sans';font-weight:normal;color:#1b1b1b;transform:scaleX(0.8864);transform-origin:0 0;">CIF - CONTA DO EMITENTE</div>
<div class="t" style="left:713.27px;top:468.27px;font-size:12.00px;line-height:14.40px;font-family:'Liberation Sans';font-weight:bold;color:#1a1a1a;transform:scaleX(1.0121);transform-origin:0 0;">Importação dos Itens (XML)</div>
<div class="a" style="left:207.3px;top:492.5px;width:400.99999999999994px;height:56.5px;border:1px solid #dcdcdc"></div>
<div class="a" style="left:213.3px;top:491.5px;width:144.7px;height:3px;background:#fff"></div>
<div class="t" style="left:216.75px;top:487.37px;font-size:11.50px;line-height:13.80px;font-family:'Liberation Sans';font-weight:normal;color:#1b1b1b;transform:scaleX(0.9523);transform-origin:0 0;">Configuração para Impostos</div>
<svg style="left:214.5px;top:505.29999999999995px" width="14" height="14"><circle cx="6.8" cy="7" r="6" fill="#f3f3f3" stroke="#7a7a7a" stroke-width="1.2"/></svg>
<div class="t" style="left:230.14px;top:506.37px;font-size:11.50px;line-height:13.80px;font-family:'Liberation Sans';font-weight:normal;color:#1b1b1b;transform:scaleX(0.9390);transform-origin:0 0;">Recalcular conforme configuração da Natureza de Operação.</div>
<svg style="left:214.5px;top:528px" width="14" height="14"><circle cx="6.8" cy="7" r="6.3" fill="#0f5cbf"/><circle cx="6.8" cy="7" r="2.6" fill="#fff"/></svg>
<div class="t" style="left:230.27px;top:529.77px;font-size:11.50px;line-height:13.80px;font-family:'Liberation Sans';font-weight:normal;color:#1b1b1b;transform:scaleX(0.9129);transform-origin:0 0;">Utilizar Valores contidos no XML. (Somente se Utilizar XML)</div>
<div class="a" style="left:207.3px;top:543.5px;width:313.40000000000003px;height:4px;background:#2843b5"></div>
<div class="a" style="left:205.7px;top:559px;width:72px;height:55px;background:#fff;border:1px solid #dedede;border-bottom:2px solid #b5b5b5;border-radius:2px"></div>
<svg style="left:217px;top:563px" width="50" height="45" viewBox="0 0 50 45"><defs><linearGradient id="wg" x1="0.2" y1="0" x2="0.8" y2="1"><stop offset="0" stop-color="#ee9a2a"/><stop offset="0.55" stop-color="#f7c416"/><stop offset="1" stop-color="#fff200"/></linearGradient><linearGradient id="wh" x1="0" y1="0" x2="0" y2="1"><stop offset="0" stop-color="#fff" stop-opacity="0.25"/><stop offset="1" stop-color="#fff" stop-opacity="0.05"/></linearGradient></defs><path d="M24.5 2L48.4 42H1.5Z" fill="url(#wg)" stroke="#8c8c8c" stroke-width="1.8" stroke-linejoin="round"/><path d="M24.5 4L38 25.5Q24.5 21 11 25.5Z" fill="url(#wh)"/><path d="M21.3 11.4H27.8L26.8 29H22.3Z" fill="#151515"/><circle cx="24.5" cy="34.4" r="3.1" fill="#151515"/></svg>
<div class="t" style="left:285.00px;top:568.07px;font-size:11.50px;line-height:13.80px;font-family:'Liberation Sans';font-weight:normal;color:#1b1b1b;transform:scaleX(0.9237);transform-origin:0 0;">ATENÇÃO: Quando for informado o XML, sempre será sugerido a</div>
<div class="t" style="left:284.78px;top:581.37px;font-size:11.50px;line-height:13.80px;font-family:'Liberation Sans';font-weight:normal;color:#1b1b1b;transform:scaleX(0.9432);transform-origin:0 0;">segunda opção de Configuração para Impostos &quot;Utilizar Valores</div>
<div class="t" style="left:284.57px;top:594.07px;font-size:11.50px;line-height:13.80px;font-family:'Liberation Sans';font-weight:normal;color:#1b1b1b;transform:scaleX(0.9360);transform-origin:0 0;">contidos no XML&quot;, sobrescrevendo qualquer opção padrão salva.</div>
<div class="a" style="left:0px;top:653px;width:1365px;height:49px;background:#f0f0f0"></div>
<div class="a" style="left:0px;top:653px;width:1365px;height:1px;background:#a0a0a0"></div>
<div class="a" style="left:1364px;top:654px;width:1px;height:47px;background:#cfcfcf"></div>
<div class="a" style="left:7px;top:659px;width:103px;height:36px;background:#fdfdfd;border:1px solid #d0d0d0;border-radius:4px"></div>
<svg style="left:18px;top:663px" width="28" height="28" viewBox="0 0 28 28"><rect x="0.3" y="0" width="13" height="4.6" fill="#4a80bd"/><path d="M4.7 4.5V24.3M4.7 10.3H13.6M4.7 17.3H13.6M4.7 24.3H13.6" fill="none" stroke="#7a7a7a" stroke-width="1"/><rect x="13.6" y="8" width="12.9" height="4.6" fill="#4a80bd"/><rect x="13.6" y="15" width="12.9" height="4.6" fill="#4a80bd"/><rect x="13.6" y="22" width="12.9" height="4.6" fill="#4a80bd"/></svg>
<div class="t" style="left:51.27px;top:670.77px;font-size:11.50px;line-height:13.80px;font-family:'Liberation Sans';font-weight:normal;color:#222;transform:scaleX(0.9426);transform-origin:0 0;">Opções</div>
<div class="a" style="left:96px;top:662px;width:2px;height:30px;background:#6e6e6e"></div>
<svg style="left:99px;top:675px" width="10" height="6"><path d="M0 0H9L4.5 5Z" fill="#000"/></svg>
<div class="a" style="left:879px;top:660px;width:94px;height:36px;background:#fdfdfd;border:1px solid #d0d0d0;border-radius:4px"></div>
<svg style="left:891px;top:664px" width="27" height="27" viewBox="0 0 27 27"><circle cx="13.5" cy="13.5" r="11.8" fill="none" stroke="#4a7fbd" stroke-width="1.8"/><path d="M7 13.5H20M12.5 8L7 13.5L12.5 19" fill="none" stroke="#4a7fbd" stroke-width="2.4"/></svg>
<div class="t" style="left:926.20px;top:671.57px;font-size:11.50px;line-height:13.80px;font-family:'Liberation Sans';font-weight:normal;color:#222;transform:scaleX(0.9497);transform-origin:0 0;">Anterior</div>
<div class="a" style="left:981px;top:658px;width:106px;height:39px;background:#fdfdfd;border:3px solid #283cbd"></div>
<svg style="left:994px;top:664px" width="27" height="27" viewBox="0 0 27 27"><circle cx="13.5" cy="13.5" r="11.8" fill="none" stroke="#4a7fbd" stroke-width="1.8"/><path d="M7 13.5H20M14.5 8L20 13.5L14.5 19" fill="none" stroke="#4a7fbd" stroke-width="2.4"/></svg>
<div class="t" style="left:1032.34px;top:671.57px;font-size:11.50px;line-height:13.80px;font-family:'Liberation Sans';font-weight:normal;color:#222;transform:scaleX(0.9305);transform-origin:0 0;">Próximo</div>
<div class="a" style="left:1241.5px;top:660px;width:113.5px;height:36px;background:#fdfdfd;border:1px solid #d0d0d0;border-radius:4px"></div>
<svg style="left:1250px;top:665px" width="34" height="30"><path d="M4.93 5.18 L6.87 7.08 L8.83 8.96 L10.81 10.83 L12.81 12.67 L14.84 14.47 L16.91 16.24 L19.02 17.96 L21.16 19.65 L23.34 21.30 L25.54 22.93 L27.76 24.53 L29.99 26.13 L30.61 25.47 L28.59 23.65 L26.58 21.82 L24.59 19.97 L22.62 18.09 L20.69 16.18 L18.79 14.23 L16.93 12.24 L15.11 10.21 L13.32 8.15 L11.55 6.06 L9.81 3.94 L8.07 1.82Z" fill="#d9522b"/><path d="M6.53 25.55 L8.68 23.99 L10.81 22.41 L12.93 20.82 L15.02 19.19 L17.09 17.53 L19.12 15.82 L21.12 14.07 L23.09 12.28 L25.03 10.45 L26.95 8.59 L28.85 6.71 L30.74 4.82 L30.26 4.18 L28.18 5.84 L26.10 7.48 L24.00 9.10 L21.88 10.69 L19.73 12.24 L17.55 13.75 L15.33 15.22 L13.08 16.65 L10.81 18.03 L8.51 19.39 L6.19 20.73 L3.87 22.05Z" fill="#d9522b"/><circle cx="6.5" cy="3.5" r="2.3" fill="#d9522b"/><circle cx="5.2" cy="23.8" r="2.2" fill="#d9522b"/></svg>
<div class="t" style="left:1296.48px;top:671.57px;font-size:11.50px;line-height:13.80px;font-family:'Liberation Sans';font-weight:normal;color:#222;transform:scaleX(0.9051);transform-origin:0 0;">Cancelar</div>
<div class="a" style="left:0px;top:702px;width:1365px;height:18px;background:#f0f0f0"></div>
<div class="a" style="left:0px;top:701px;width:1365px;height:1px;background:#a8a8a8"></div>
<div class="a" style="left:0px;top:702px;width:1365px;height:1px;background:#fbfbfb"></div>
<div class="a" style="left:198px;top:705px;width:1px;height:15px;background:#d9d9d9"></div>
<div class="a" style="left:549px;top:705px;width:1px;height:15px;background:#d9d9d9"></div>
<div class="a" style="left:899px;top:705px;width:1px;height:15px;background:#d9d9d9"></div>
<div class="a" style="left:1050px;top:705px;width:1px;height:15px;background:#d9d9d9"></div>
<div class="a" style="left:1171px;top:705px;width:1px;height:15px;background:#d9d9d9"></div>
<div class="t" style="left:-0.09px;top:707.07px;font-size:12.00px;line-height:14.40px;font-family:'Liberation Sans';font-weight:normal;color:#202020;transform:scaleX(0.9464);transform-origin:0 0;">Usuário: UNICODE</div>
<div class="t" style="left:202.39px;top:707.07px;font-size:12.00px;line-height:14.40px;font-family:'Liberation Sans';font-weight:normal;color:#202020;transform:scaleX(0.9487);transform-origin:0 0;">Banco de Dados: DB LIMPO / Versão: 2024.12.02</div>
<div class="t" style="left:553.97px;top:707.07px;font-size:12.00px;line-height:14.40px;font-family:'Liberation Sans';font-weight:normal;color:#202020;transform:scaleX(0.9052);transform-origin:0 0;">001 - UNICODE SOFTWARE</div>
<div class="t" style="left:903.52px;top:707.07px;font-size:12.00px;line-height:14.40px;font-family:'Liberation Sans';font-weight:normal;color:#202020;transform:scaleX(0.9170);transform-origin:0 0;">BD: 1813</div>
<div class="t" style="left:1174.71px;top:707.07px;font-size:12.00px;line-height:14.40px;font-family:'Liberation Sans';font-weight:normal;color:#202020;transform:scaleX(0.9857);transform-origin:0 0;">Conectado - 15sec  -  Plano Empresa</div>
</body></html>
